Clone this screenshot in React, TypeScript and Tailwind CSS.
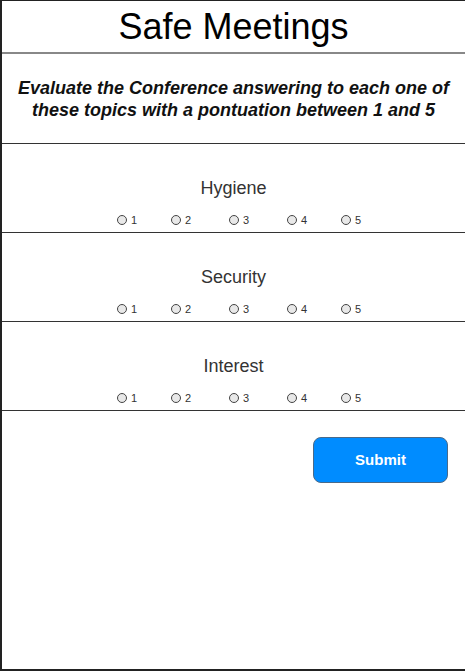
import React from 'react';

const topics = ['Hygiene', 'Security', 'Interest'];
// left offset of each radio, as in the mockup
const radioX = [115, 169, 227, 285, 339];

const RatingRow: React.FC<{ name: string }> = ({ name }) => (
  <div className="h-[89px] border-b border-[#333] flex flex-col pt-[35px]">
    <div className="h-[18px] flex items-center justify-center text-[18px] text-[#333] leading-none">{name}</div>
    <div className="relative h-[10px] mt-[18px]">
      {radioX.map((x, i) => (
        <label
          key={i}
          className="absolute top-0 h-[10px] flex items-center gap-[4px] text-[11px] text-[#333] leading-none"
          style={{ left: x }}
        >
          <span className="w-[10px] h-[10px] rounded-full border border-[#444] bg-[#e8e8e8]" />
          {i + 1}
        </label>
      ))}
    </div>
  </div>
);

export default function App() {
  return (
    <div
      className="w-[465px] h-[671px] bg-white border-l-2 border-t border-b-2 border-[#222] flex flex-col"
      style={{ fontFamily: '"Liberation Sans", Arial, sans-serif' }}
    >
      <div className="h-[53px] border-b-2 border-[#888] flex items-center justify-center text-[36px] text-black leading-none">
        Safe Meetings
      </div>
      <div className="h-[90px] border-b border-[#333] flex items-center justify-center text-center font-bold italic text-[18px] leading-[22px] text-[#111]">
        <p>Evaluate the Conference answering to each one of<br />these topics with a pontuation between 1 and 5</p>
      </div>
      {topics.map((t) => (
        <RatingRow key={t} name={t} />
      ))}
      <div className="flex justify-end pr-[17px] pt-[26px]">
        <button className="w-[135px] h-[46px] rounded-[8px] bg-[#008cff] border border-[#4a6a8a] text-white font-bold text-[15px]">
          Submit
        </button>
      </div>
    </div>
  );
}
